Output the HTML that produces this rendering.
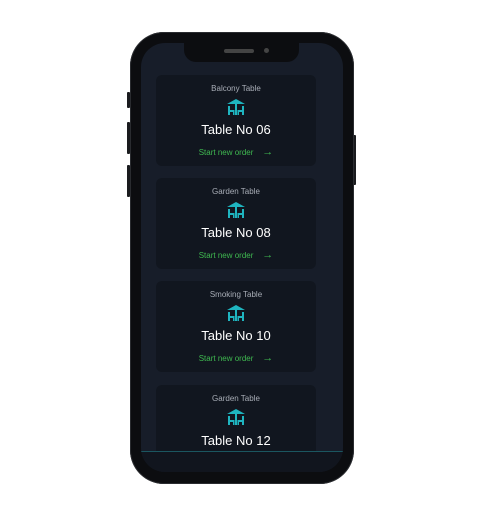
<!DOCTYPE html>
<html><head><style>
body{margin:0;width:483px;height:516px;background:#fff;position:relative;overflow:hidden;font-family:"Liberation Sans",sans-serif}
.phone{position:absolute;left:130px;top:32px;width:224px;height:452px;background:#0c0d10;border-radius:34px;box-shadow:0 0 0 1px #2a2c30 inset}
.btn{position:absolute;background:#1a1b1e;width:3px;border-radius:1px}
.screen{position:absolute;left:141px;top:43px;width:202px;height:429px;background:#171d29;border-radius:24px;overflow:hidden}
.notch{position:absolute;left:43px;top:0;width:115px;height:19px;background:#0c0d10;border-radius:0 0 12px 12px}
.spk{position:absolute;left:40px;top:6px;width:30px;height:4px;border-radius:2px;background:#444}
.cam{position:absolute;left:80px;top:5px;width:5px;height:5px;border-radius:50%;background:#444}
.card{position:absolute;left:15px;width:160px;height:91px;background:#11161f;border-radius:6px;text-align:center}
.lab{position:absolute;top:9px;width:100%;font-size:8px;color:#a8adb6}
.ic{position:absolute;left:70px;top:24px}
.tt{position:absolute;top:47px;width:100%;font-size:13px;color:#fff}
.so{position:absolute;top:73px;width:100%;font-size:8px;color:#3fb950}
.so b{font-size:11px;line-height:8px}
.bot{position:absolute;left:0;top:408px;width:202px;height:21px;background:#11151e;border-top:1px solid #1b5660}
</style></head><body>
<div class="btn" style="left:127px;top:92px;height:16px"></div>
<div class="btn" style="left:127px;top:122px;height:32px"></div>
<div class="btn" style="left:127px;top:165px;height:32px"></div>
<div class="btn" style="left:353px;top:135px;height:50px"></div>
<div class="phone"></div>
<div class="screen">
<div class="notch"><div class="spk"></div><div class="cam"></div></div>
<div class="card" style="top:32px"><div class="lab">Balcony Table</div><svg class="ic" width="20" height="16" viewBox="0 0 20 16"><path d="M10 0L19 5H1Z" fill="#1fb5c0"/><rect x="9" y="4" width="2" height="12" fill="#1fb5c0"/><rect x="2" y="7" width="2" height="9" fill="#1fb5c0"/><rect x="4" y="11" width="4" height="2" fill="#1fb5c0"/><rect x="7" y="11" width="1.5" height="5" fill="#1fb5c0"/><rect x="16" y="7" width="2" height="9" fill="#1fb5c0"/><rect x="12" y="11" width="4" height="2" fill="#1fb5c0"/><rect x="11.5" y="11" width="1.5" height="5" fill="#1fb5c0"/></svg><div class="tt">Table No 06</div><div class="so">Start new order &nbsp;&nbsp;&nbsp;<b>→</b></div></div>
<div class="card" style="top:135px"><div class="lab">Garden Table</div><svg class="ic" width="20" height="16" viewBox="0 0 20 16"><path d="M10 0L19 5H1Z" fill="#1fb5c0"/><rect x="9" y="4" width="2" height="12" fill="#1fb5c0"/><rect x="2" y="7" width="2" height="9" fill="#1fb5c0"/><rect x="4" y="11" width="4" height="2" fill="#1fb5c0"/><rect x="7" y="11" width="1.5" height="5" fill="#1fb5c0"/><rect x="16" y="7" width="2" height="9" fill="#1fb5c0"/><rect x="12" y="11" width="4" height="2" fill="#1fb5c0"/><rect x="11.5" y="11" width="1.5" height="5" fill="#1fb5c0"/></svg><div class="tt">Table No 08</div><div class="so">Start new order &nbsp;&nbsp;&nbsp;<b>→</b></div></div>
<div class="card" style="top:238px"><div class="lab">Smoking Table</div><svg class="ic" width="20" height="16" viewBox="0 0 20 16"><path d="M10 0L19 5H1Z" fill="#1fb5c0"/><rect x="9" y="4" width="2" height="12" fill="#1fb5c0"/><rect x="2" y="7" width="2" height="9" fill="#1fb5c0"/><rect x="4" y="11" width="4" height="2" fill="#1fb5c0"/><rect x="7" y="11" width="1.5" height="5" fill="#1fb5c0"/><rect x="16" y="7" width="2" height="9" fill="#1fb5c0"/><rect x="12" y="11" width="4" height="2" fill="#1fb5c0"/><rect x="11.5" y="11" width="1.5" height="5" fill="#1fb5c0"/></svg><div class="tt">Table No 10</div><div class="so">Start new order &nbsp;&nbsp;&nbsp;<b>→</b></div></div>
<div class="card" style="top:342px"><div class="lab">Garden Table</div><svg class="ic" width="20" height="16" viewBox="0 0 20 16"><path d="M10 0L19 5H1Z" fill="#1fb5c0"/><rect x="9" y="4" width="2" height="12" fill="#1fb5c0"/><rect x="2" y="7" width="2" height="9" fill="#1fb5c0"/><rect x="4" y="11" width="4" height="2" fill="#1fb5c0"/><rect x="7" y="11" width="1.5" height="5" fill="#1fb5c0"/><rect x="16" y="7" width="2" height="9" fill="#1fb5c0"/><rect x="12" y="11" width="4" height="2" fill="#1fb5c0"/><rect x="11.5" y="11" width="1.5" height="5" fill="#1fb5c0"/></svg><div class="tt" style="top:48px">Table No 12</div></div>
<div class="bot"></div>
</div>
</body></html>
